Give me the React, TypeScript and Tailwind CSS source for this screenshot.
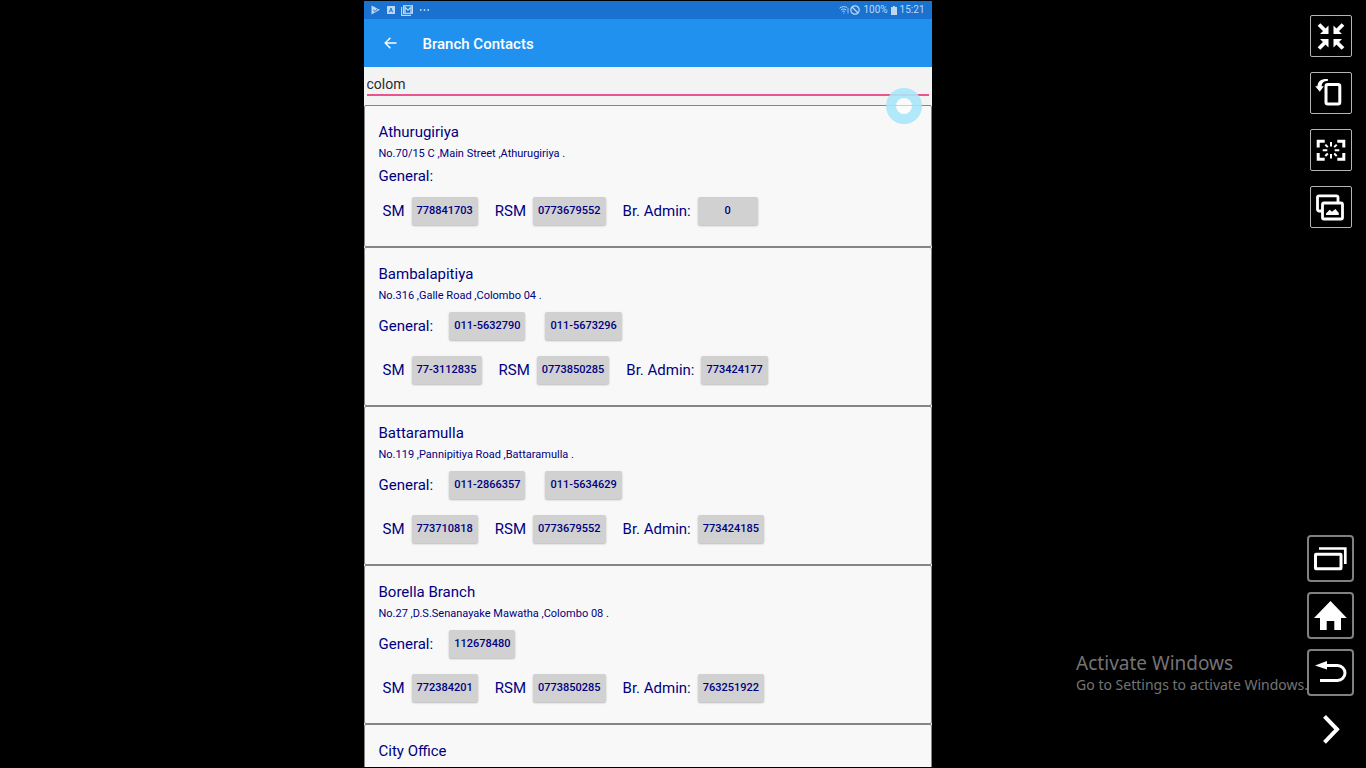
import { useState } from "react";
import type { ReactNode } from "react";

type Branch = {
  name: string;
  address?: string;
  general?: string[];
  sm?: string;
  rsm?: string;
  admin?: string;
};

const branches: Branch[] = [
  {
    name: "Athurugiriya",
    address: "No.70/15 C ,Main Street ,Athurugiriya .",
    general: [],
    sm: "778841703",
    rsm: "0773679552",
    admin: "0",
  },
  {
    name: "Bambalapitiya",
    address: "No.316 ,Galle Road ,Colombo 04 .",
    general: ["011-5632790", "011-5673296"],
    sm: "77-3112835",
    rsm: "0773850285",
    admin: "773424177",
  },
  {
    name: "Battaramulla",
    address: "No.119 ,Pannipitiya Road ,Battaramulla .",
    general: ["011-2866357", "011-5634629"],
    sm: "773710818",
    rsm: "0773679552",
    admin: "773424185",
  },
  {
    name: "Borella Branch",
    address: "No.27 ,D.S.Senanayake Mawatha ,Colombo 08 .",
    general: ["112678480"],
    sm: "772384201",
    rsm: "0773850285",
    admin: "763251922",
  },
  { name: "City Office" },
];

function PhoneButton({ number }: { number: string }) {
  return (
    <button
      type="button"
      className="h-7 min-w-15 rounded-xs bg-[#d1d1d2] px-[5px] text-[11px] font-medium shadow-[0_1px_2px_rgba(0,0,0,0.25)]"
    >
      {number}
    </button>
  );
}

function Contact({ label, number }: { label: string; number: string }) {
  return (
    <div className="flex items-center gap-[7px]">
      <span>{label}</span>
      <PhoneButton number={number} />
    </div>
  );
}

function BranchCard({ branch }: { branch: Branch }) {
  const { name, address, general, sm, rsm, admin } = branch;
  return (
    <li className="shrink-0 rounded-xs border border-[#858585] bg-[#f8f8f8] px-3.5 pt-4 pb-[21px] text-[15px] leading-5 text-[#000080]">
      <h2>{name}</h2>
      {address && <p className="mt-1 text-[11px] leading-4">{address}</p>}
      {general && (
        <div
          className={
            general.length > 0
              ? "mt-2 mb-4 flex items-center gap-5"
              : "mt-1 mb-[11px] flex h-5 items-center"
          }
        >
          <div className="flex items-center gap-4">
            <span>General:</span>
            {general[0] && <PhoneButton number={general[0]} />}
          </div>
          {general[1] && <PhoneButton number={general[1]} />}
        </div>
      )}
      {sm && rsm && admin && (
        <div className="flex items-center gap-[17px] pl-1">
          <Contact label="SM" number={sm} />
          <Contact label="RSM" number={rsm} />
          <Contact label="Br. Admin:" number={admin} />
        </div>
      )}
    </li>
  );
}

function StatusBar() {
  return (
    <div className="flex h-[18px] shrink-0 items-center justify-between bg-[#1971d0] pr-[7px] pl-[7px] text-[#bdd8f5]">
      <div className="flex items-center gap-1.5">
        <svg width="10" height="10" viewBox="0 0 10 10" aria-hidden="true">
          <path d="M.5.5 9 4.8.5 9.4Z" fill="currentColor" />
          <path d="M2.2 4.8 4 6.5 7.4 2.8" fill="none" stroke="#1971d0" strokeWidth="1" />
        </svg>
        <svg width="8" height="8" viewBox="0 0 8 8" aria-hidden="true">
          <rect width="8" height="8" rx=".5" fill="currentColor" />
          <path d="M2.3 6.3 4 2l1.700 4.300M3 4.900h2" fill="none" stroke="#1971d0" strokeWidth=".9" />
        </svg>
        <svg width="12" height="11" viewBox="0 0 12 11" fill="none" stroke="currentColor" aria-hidden="true">
          <path d="M.6 2v8.400h9.400" strokeWidth="1.100" />
          <rect x="2.600" y=".7" width="8.800" height="7.600" strokeWidth="1.200" />
          <path d="M4 8V2.200l3 2.900 3-2.900V8" strokeWidth="1.300" />
        </svg>
        <svg width="12" height="4" viewBox="0 0 12 4" fill="currentColor" aria-hidden="true">
          <circle cx="1.800" cy="2" r=".9" />
          <circle cx="5.500" cy="2" r=".9" />
          <circle cx="9.200" cy="2" r=".9" />
        </svg>
      </div>
      <div className="flex items-center gap-[3px] text-[10px] leading-4">
        <div className="flex items-center gap-px">
          <svg width="10" height="8" viewBox="0 0 10 8" fill="none" stroke="currentColor" aria-hidden="true">
            <path d="M.5 2.200C3 .2 6 .2 8.200 1.600M2 4c1.600-1.300 3.700-1.300 5.200 0M3.400 5.600c.8-.7 1.800-.7 2.600 0" />
            <path d="M9 2v5.500M4.200 7.200h1.200" strokeWidth=".8" />
          </svg>
          <svg width="10" height="10" viewBox="0 0 10 10" fill="none" stroke="currentColor" strokeWidth="1.200" aria-hidden="true">
            <circle cx="5" cy="5" r="4.200" />
            <path d="m2 2 6 6" />
          </svg>
        </div>
        <span>100%</span>
        <svg width="6" height="9" viewBox="0 0 6 9" fill="currentColor" aria-hidden="true">
          <path d="M2 0h2v1h2v8H0V1h2Z" />
        </svg>
        <span>15:21</span>
      </div>
    </div>
  );
}

function DeviceScreen() {
  const [query, setQuery] = useState("colom");
  return (
    <main className="relative my-px flex w-full max-w-[568px] flex-col overflow-hidden bg-[#f3f3f3] font-[Roboto,sans-serif]">
      <StatusBar />
      <header className="flex h-12 shrink-0 items-center gap-[26px] bg-[#2191ef] pt-px pl-5 text-white">
        <button type="button" aria-label="Back" className="mb-0.5">
          <svg width="13" height="12" viewBox="0 0 13 12" fill="none" stroke="currentColor" strokeWidth="1.400">
            <path d="M12.500 6H1.200M6.400.8 1.200 6l5.200 5.200" />
          </svg>
        </button>
        <h1 className="text-[15px] leading-5 font-medium">Branch Contacts</h1>
      </header>
      <div className="shrink-0 px-[3px] pt-1.5 pb-[9px]">
        <input
          type="text"
          aria-label="Search branches"
          value={query}
          onChange={(event) => setQuery(event.target.value)}
          className="block h-[23px] w-full border-b-2 border-[#e9568f] text-[14px] text-[#2b2b2b] outline-none"
        />
      </div>
      <ul className="flex min-h-0 flex-1 flex-col overflow-hidden">
        {branches.map((branch) => (
          <BranchCard key={branch.name} branch={branch} />
        ))}
      </ul>
      <div className="pointer-events-none absolute top-[87px] right-2.5 size-9 rounded-full border-10 border-[#a8e6fae6] bg-white/60 bg-clip-padding" />
    </main>
  );
}

function ToolButton({ label, children }: { label: string; children: ReactNode }) {
  return (
    <button
      type="button"
      aria-label={label}
      className="flex size-[42px] items-center justify-center rounded-xs border border-[#b4b4b4]"
    >
      <svg width="42" height="42" viewBox="0 0 42 42" className="shrink-0" fill="none" stroke="currentColor">
        {children}
      </svg>
    </button>
  );
}

function NavButton({ label, children }: { label: string; children: ReactNode }) {
  return (
    <button
      type="button"
      aria-label={label}
      className="flex size-[47px] items-center justify-center rounded-sm border-2 border-[#808080] bg-black"
    >
      <svg width="47" height="47" viewBox="0 0 47 47" className="shrink-0" fill="none" stroke="currentColor">
        {children}
      </svg>
    </button>
  );
}

function SideRail() {
  return (
    <aside className="relative flex w-[71px] shrink-0 flex-col items-center justify-between py-[15px] text-white">
      <div className="flex flex-col gap-[15px]">
        <ToolButton label="Exit full screen">
          <path
            d="m9 9.500 7 7M33 9.500l-7 7M9 33.500l7-7M33 33.500l-7-7"
            strokeWidth="3.800"
          />
          <path
            d="M18.500 10.500v8.500H10ZM23.500 10.500v8.500H32ZM18.500 32.500V24H10ZM23.500 32.500V24H32Z"
            fill="currentColor"
            stroke="none"
          />
        </ToolButton>
        <ToolButton label="Rotate screen">
          <rect x="16" y="12.600" width="13.800" height="19.500" rx="1.800" strokeWidth="3" />
          <path
            d="M18 7.200c-6.500-.6-10 2-10.600 7H5.200l4.600 5.500 4-5.500h-2.200C11.900 11.200 13.500 8.900 18 8.800Z"
            fill="currentColor"
            stroke="none"
          />
        </ToolButton>
        <ToolButton label="Capture screen">
          <path
            d="M8.200 18.500v-6.300h6.500M27.300 12.200h6.500v6.300M33.800 24v6.300h-6.500M14.700 30.300H8.200V24"
            strokeWidth="3"
          />
          <path
            d="M12.700 21.300h4.600M24.700 21.300h4.600M21 13v4.600M21 25v4.600M15.300 15.600l2.500 2.500M26.700 15.600l-2.500 2.500M15.300 27l2.500-2.500M26.700 27l-2.500-2.500"
            strokeWidth="2"
          />
        </ToolButton>
        <ToolButton label="Image gallery">
          <path d="M12 25H9a1.500 1.500 0 0 1-1.500-1.500V11.300A1.500 1.500 0 0 1 9 9.800h17.500a1.500 1.500 0 0 1 1.500 1.500V16" strokeWidth="2.800" />
          <rect x="12.500" y="17" width="20" height="16" rx="1.500" strokeWidth="2.800" />
          <path
            d="M16 29v-1.600l3.700-3.700 2.300 2 3.400-2.800 3.400 4V29Z"
            fill="currentColor"
            stroke="none"
          />
        </ToolButton>
      </div>
      <div className="flex flex-col items-center gap-2.5">
        <NavButton label="Recent apps">
          <rect x="8.500" y="19.200" width="25.500" height="14.500" rx=".5" strokeWidth="3" />
          <path d="M12 13.500h26.300V29" strokeWidth="2.700" />
        </NavButton>
        <NavButton label="Home">
          <path
            d="M23.500 9 39.800 26H34v12h-6.700v-9h-7.600v9H13V26H7Z"
            fill="currentColor"
            stroke="none"
          />
        </NavButton>
        <NavButton label="Back">
          <path d="M18 16.500h12.500a7.500 7.500 0 0 1 0 15H13" strokeWidth="3" />
          <path d="M8 16.500 20 12v8.600Z" fill="currentColor" stroke="none" />
        </NavButton>
        <button type="button" aria-label="Collapse toolbar" className="size-[47px]">
          <svg width="47" height="47" viewBox="0 0 47 47" fill="none" stroke="currentColor" strokeWidth="4">
            <path d="m17.500 10.300 12.500 13-12.500 13" />
          </svg>
        </button>
      </div>
    </aside>
  );
}

export default function App() {
  return (
    <div className="relative flex h-screen overflow-hidden bg-black">
      <div className="flex min-w-0 flex-1 justify-center">
        <DeviceScreen />
      </div>
      <div className="pointer-events-none absolute right-[58px] bottom-[73px] font-['Noto_Sans',sans-serif] whitespace-nowrap text-[#747474]">
        <p className="text-[19px] leading-6">Activate Windows</p>
        <p className="text-[14px] leading-5">Go to Settings to activate Windows.</p>
      </div>
      <SideRail />
    </div>
  );
}
